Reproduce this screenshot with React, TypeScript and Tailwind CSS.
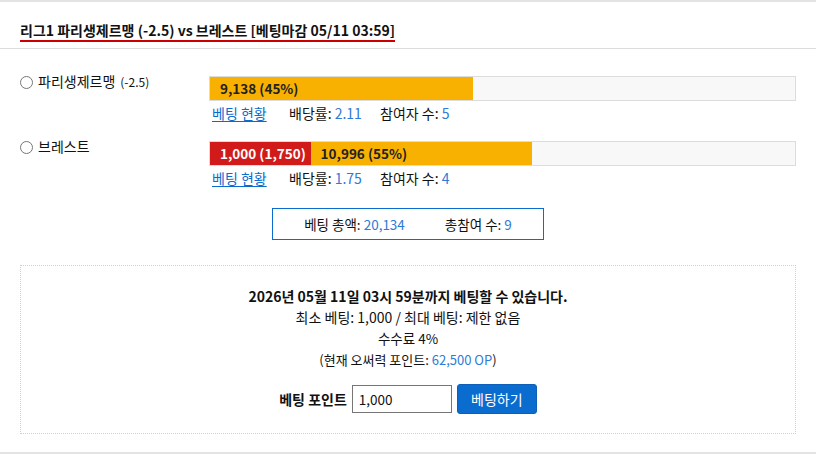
import React, { useState } from 'react';

const font = { fontFamily: '"Noto Sans CJK KR", "Noto Sans", sans-serif' };

interface Team {
    name: string;
    handicap?: string;
    segments: { label: string; width: number; color: string; text: string }[];
    odds: string;
    participants: number;
}

const teams: Team[] = [
    {
        name: '파리생제르맹',
        handicap: '(-2.5)',
        segments: [{ label: '9,138 (45%)', width: 45, color: 'bg-[#f8b100]', text: 'text-[#222]' }],
        odds: '2.11',
        participants: 5,
    },
    {
        name: '브레스트',
        segments: [
            { label: '1,000 (1,750)', width: 17.2, color: 'bg-[#d11b1b]', text: 'text-white' },
            { label: '10,996 (55%)', width: 37.8, color: 'bg-[#f8b100]', text: 'text-[#222]' },
        ],
        odds: '1.75',
        participants: 4,
    },
];

const TeamRow: React.FC<{ team: Team; checked: boolean; onPick: () => void }> = ({ team, checked, onPick }) => (
    <div className="flex">
        <label className="w-[189px] flex items-start gap-[5px] -mt-[5px] cursor-pointer" onClick={onPick}>
            <span className="mt-[5px] w-[13px] h-[13px] rounded-full border border-[#767676] bg-white flex items-center justify-center">
                {checked && <span className="w-[7px] h-[7px] rounded-full bg-[#0a6ccf]" />}
            </span>
            <span className="text-[14px] text-[#111]">
                {team.name}
                {team.handicap && <span className="text-[12px] ml-[5px]">{team.handicap}</span>}
            </span>
        </label>
        <div className="flex-1">
            <div className="h-[25px] border border-[#dcdcdc] bg-[#f8f8f8] flex">
                {team.segments.map((s, i) => (
                    <div
                        key={i}
                        className={`${s.color} ${s.text} h-full flex items-center pl-[10px] text-[13.5px] font-bold`}
                        style={{ width: `${s.width}%` }}
                    >
                        {s.label}
                    </div>
                ))}
            </div>
            <div className="flex items-center text-[14px] mt-[2px] pl-[3px]">
                <a href="#" className="text-[#0a6ccf] underline underline-offset-2 w-[77px]">베팅 현황</a>
                <span className="w-[91px] text-[#111]">배당률: <span className="text-[#2f7ad6]">{team.odds}</span></span>
                <span className="text-[#111]">참여자 수: <span className="text-[#2f7ad6]">{team.participants}</span></span>
            </div>
        </div>
    </div>
);

export default function App() {
    const [pick, setPick] = useState<number | null>(null);
    const [amount, setAmount] = useState('1,000');

    return (
        <div className="w-[816px] h-[456px] bg-white text-[#111] overflow-hidden" style={font}>
            <div className="border-t-2 border-[#e3e3e3] border-b border-b-[#dddddd] px-5 pt-[15px] h-[49px]">
                <h1 className="inline-block text-[14px] font-bold leading-[18px] pb-[1px] border-b-2 border-[#cc0000]">
                    리그1 파리생제르맹 (-2.5) vs 브레스트 [베팅마감 05/11 03:59]
                </h1>
            </div>

            <div className="px-5 pt-[27px] space-y-[17px]">
                {teams.map((t, i) => (
                    <TeamRow key={i} team={t} checked={pick === i} onPick={() => setPick(i)} />
                ))}
            </div>

            <div className="flex justify-center mt-[19px]">
                <div className="w-[272px] h-[32px] border border-[#0a6ccf] flex items-center justify-center gap-[40px] text-[13.5px]">
                    <span>베팅 총액: <span className="text-[#2f7ad6]">20,134</span></span>
                    <span>총참여 수: <span className="text-[#2f7ad6]">9</span></span>
                </div>
            </div>

            <div className="mx-5 mt-[25px] h-[169px] border border-dotted border-[#cfcfcf] flex flex-col items-center pt-[20px] text-[13.5px] leading-[21px]">
                <p className="font-bold text-[14px]">2026년 05월 11일 03시 59분까지 베팅할 수 있습니다.</p>
                <p className="text-[14px]">최소 베팅: 1,000 / 최대 베팅: 제한 없음</p>
                <p>수수료 4%</p>
                <p className="text-[13px]">(현재 오써력 포인트: <span className="text-[#2f7ad6]">62,500 OP</span>)</p>
                <div className="flex items-center gap-[5px] mt-[14px]">
                    <span className="font-bold text-[14px]">베팅 포인트</span>
                    <input
                        value={amount}
                        onChange={(e) => setAmount(e.target.value)}
                        className="w-[100px] h-[28px] border border-[#767676] px-[6px] text-[13.5px] outline-none"
                    />
                    <button className="w-[80px] h-[30px] bg-[#0a6ccf] text-white rounded-[3px] border border-[#0d5fb8] text-[14px]">
                        베팅하기
                    </button>
                </div>
            </div>

            <div className="mt-[18px] border-t-2 border-[#e3e3e3]" />
        </div>
    );
}
